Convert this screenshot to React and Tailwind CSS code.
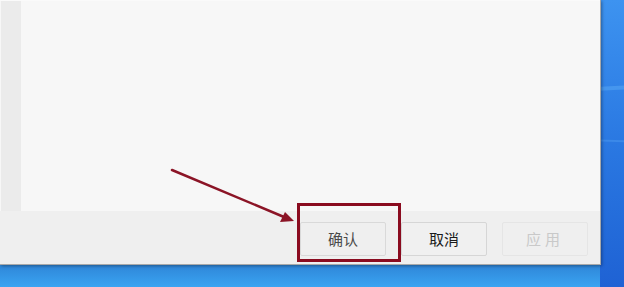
import React from "react";

const Btn = ({ children, className }) => (
  <div
    className={
      "w-[86px] h-[34px] flex items-center justify-center rounded-[2px] border text-[15px] " +
      className
    }
  >
    {children}
  </div>
);

const App = () => {
  return (
    <div
      className="relative w-[624px] h-[287px] overflow-hidden bg-gradient-to-b from-[#3d93f0] via-[#2a78e2] to-[#1f62d4]"
      style={{ fontFamily: '"Noto Sans CJK SC", "Noto Sans", sans-serif' }}
    >
      {/* desktop light streaks */}
      <div className="absolute left-[600px] top-[86px] w-[30px] h-[4px] bg-[#5aaaf6] opacity-50 rotate-[-3deg]" />
      <div className="absolute left-[600px] top-[140px] w-[30px] h-[2px] bg-[#4c9af0] opacity-50 rotate-[2deg]" />
      <div className="absolute left-0 top-[265px] w-[600px] h-[22px] bg-gradient-to-b from-[#2f86d8] to-[#3aa4f2]" />

      {/* window */}
      <div className="relative w-[601px] h-[265px] flex flex-col border-r border-b border-[#a9a9a9] shadow-[1px_1px_3px_rgba(0,0,0,0.35)]">
        <div className="flex h-[211px] bg-[#f7f7f7] border-t border-[#fafafa]">
          <div className="w-[20px] ml-[1px] bg-[#ebebeb]" />
          <div className="flex-1" />
        </div>
        <div className="flex-1 bg-[#efefef] flex justify-end items-start pt-[11px] pr-[12px] gap-[15px]">
          <Btn className="border-[#d9d9d9] bg-[#efefef] text-[#4a4a4a]">确认</Btn>
          <Btn className="border-[#d6d6d6] bg-[#f0f0f0] text-[#1a1a1a]">取消</Btn>
          <Btn className="border-[#e5e5e5] bg-[#efefef] text-[#c9c9c9] tracking-[4px]">应用</Btn>
        </div>
      </div>

      {/* annotation */}
      <div className="absolute left-[297px] top-[203px] w-[104px] h-[59px] border-[3px] border-[#8a0b1f]" />
      <svg className="absolute left-0 top-0" width="624" height="287">
        <line x1="172" y1="170" x2="284" y2="217" stroke="#8b1426" strokeWidth="2.5" strokeLinecap="round" />
        <polygon points="294,221 280,222 285,212" fill="#8b1426" />
      </svg>
    </div>
  );
};

export default App;
